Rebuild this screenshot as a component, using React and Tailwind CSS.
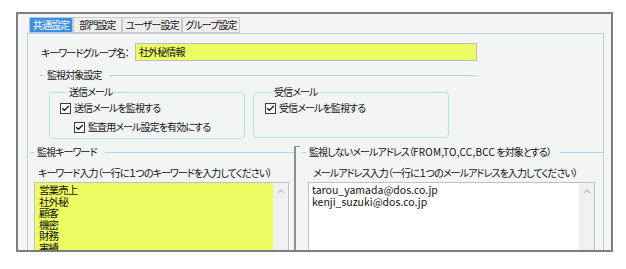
import { Check } from 'lucide-react'

const tabs = [
  { label: '共通設定', w: 'w-[44px]', active: true },
  { label: '部門設定', w: 'w-[49px]' },
  { label: 'ユーザー設定', w: 'w-[60px]' },
  { label: 'グループ設定', w: 'w-[58px]' },
]

const keywords = ['営業売上', '社外秘', '顧客', '機密', '財務', '実績']
const emails = ['tarou_yamada@dos.co.jp', 'kenji_suzuki@dos.co.jp']

function Legend({ label, className = '', gap = 'ml-[7px]' }) {
  return (
    <div className={`flex items-center h-[12px] ${className}`}>
      <span className="w-[4px] h-px bg-[#a3d8f2]" />
      <span className="ml-[3px] leading-[12px] whitespace-nowrap">{label}</span>
      <span className={`flex-1 h-px bg-[#a3d8f2] ${gap}`} />
    </div>
  )
}

function CheckBox({ label, className = '' }) {
  return (
    <div className={`flex items-center h-[12px] ${className}`}>
      <span className="w-[11px] h-[11px] border border-[#3a3a3a] bg-white flex items-center justify-center">
        <Check size={9} strokeWidth={3.5} color="#111" />
      </span>
      <span className="ml-[3px] leading-[12px] whitespace-nowrap">{label}</span>
    </div>
  )
}

function ScrollBar() {
  return (
    <div className="w-[15px] bg-[#eef0f1] flex justify-center pt-[6px]">
      <svg width="8" height="5" viewBox="0 0 8 5">
        <polyline points="1,4 4,1 7,4" fill="none" stroke="#b9bec2" strokeWidth="1.3" />
      </svg>
    </div>
  )
}

export default function App() {
  return (
    <div className="w-[626px] h-[269px] bg-white overflow-hidden pt-[12px] pl-[16px] text-[10px] tracking-[-0.9px] text-[#111] font-['Noto_Sans_CJK_JP',sans-serif] [font-feature-settings:'palt']">
      <div className="w-[597px] h-[240px] border-2 border-[#7d7d7d] bg-[#f3f4f4] overflow-hidden">

        {/* Tabs */}
        <div className="flex items-end pl-[11px] pt-[3px] h-[19px]">
          {tabs.map(t => (
            <div key={t.label}
              className={`${t.w} h-[16px] flex items-center justify-center border leading-[14px] whitespace-nowrap ${t.active ? 'bg-[#3d8ee0] border-[#a8c9ec] text-white' : 'bg-[#eeeeee] border-[#c9c9c9]'}`}>
              {t.label}
            </div>
          ))}
        </div>

        {/* Panel */}
        <div className="ml-[9px] w-[577px] h-[260px] border border-[#c6ced3]">

          <div className="flex items-center pt-[9px] pl-[13px]">
            <span className="w-[94px] whitespace-nowrap">キーワードグループ名：</span>
            <div className="w-[342px] h-[18px] border border-[#b7bfc4] bg-[#ecfc62] pl-[3px] leading-[16px]">社外秘情報</div>
          </div>

          <Legend label="監視対象設定" className="ml-[12px] w-[436px] mt-[8px]" />

          <div className="flex gap-[8px] ml-[21px] mt-[5px]">
            <fieldset className="w-[196px] h-[53px] border border-[#b2e6e1] rounded-[4px] pl-[10px]">
              <legend className="ml-[7px] px-[2px] leading-[12px]">送信メール</legend>
              <CheckBox label="送信メールを監視する" className="mt-[4px]" />
              <CheckBox label="監査用メール設定を有効にする" className="mt-[7px] ml-[14px]" />
            </fieldset>
            <fieldset className="w-[196px] h-[52px] border border-[#b2e6e1] rounded-[4px] pl-[11px]">
              <legend className="ml-[7px] px-[2px] leading-[12px]">受信メール</legend>
              <CheckBox label="受信メールを監視する" className="mt-[4px]" />
            </fieldset>
          </div>

          <div className="flex mt-[7px]">
            {/* Keywords */}
            <div className="w-[266px]">
              <Legend label="監視キーワード" className="pl-[2px]" gap="ml-[8px]" />
              <div className="pl-[10px] mt-[9px] leading-[12px] whitespace-nowrap">キーワード入力（一行に１つのキーワードを入力してください）</div>
              <div className="ml-[6px] mt-[3px] w-[255px] h-[80px] border border-[#b9c3c9] flex">
                <div className="flex-1 bg-[#ecfc62] pl-[4px] pt-[1px] leading-[11.6px] text-[10.5px]">
                  {keywords.map(k => <div key={k}>{k}</div>)}
                </div>
                <ScrollBar />
              </div>
            </div>

            {/* Excluded addresses */}
            <div className="relative flex-1 border-l-2 border-[#8f8f8f]">
              <span className="absolute left-0 top-0 w-[4px] h-px bg-[#8f8f8f]" />
              <Legend
                label={<>監視しないメールアドレス（<span className="tracking-[0.2px]">FROM,TO,CC,BCC</span> を対象とする）</>}
                className="ml-[6px]" gap="ml-[9px]" />
              <div className="pl-[17px] mt-[9px] leading-[12px] whitespace-nowrap">メールアドレス入力（一行に１つのメールアドレスを入力してください）</div>
              <div className="ml-[12px] mt-[3px] w-[287px] h-[80px] border border-[#b9c3c9] flex bg-white">
                <div className="flex-1 pl-[3px] pt-[1px] leading-[11.6px] text-[10.5px] tracking-normal">
                  {emails.map(e => <div key={e}>{e}</div>)}
                </div>
                <ScrollBar />
              </div>
            </div>
          </div>
        </div>
      </div>
    </div>
  )
}
